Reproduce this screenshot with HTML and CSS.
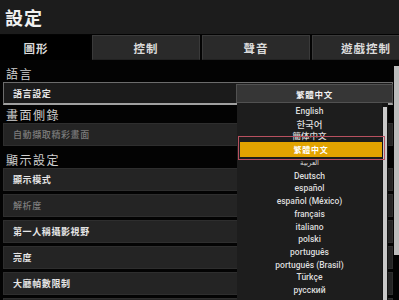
FILE: index.html
```html
<!DOCTYPE html>
<html lang="zh-Hant">
<head>
<meta charset="utf-8">
<link rel="stylesheet" href="styles.css">
</head>
<body>
<div class="app">
  <header class="header"><h1 class="title">設定</h1></header>
  <nav class="tabs">
    <div class="tab active">圖形</div>
    <div class="tab">控制</div>
    <div class="tab">聲音</div>
    <div class="tab">遊戲控制</div>
  </nav>
  <main class="content">
    <div class="label first">語言</div>
    <div class="row focused"><span>語言設定</span></div>
    <div class="label">畫面側錄</div>
    <div class="row dim"><span>自動擷取精彩畫面</span></div>
    <div class="label third">顯示設定</div>
    <div class="row"><span>顯示模式</span></div>
    <div class="row dim"><span>解析度</span></div>
    <div class="row"><span>第一人稱攝影視野</span></div>
    <div class="row"><span>亮度</span></div>
    <div class="row"><span>大廳幀數限制</span></div>
    <div class="row"></div>
  </main>

  <div class="dropdown">
    <div class="dd-head">繁體中文</div>
    <div class="dd-list">
      <div class="dd-items">
        <div class="item">English</div>
        <div class="item kr">한국어</div>
        <div class="item">簡体中文</div>
        <div class="item selected">繁體中文</div>
        <div class="item ar">العربية</div>
        <div class="item">Deutsch</div>
        <div class="item">español</div>
        <div class="item">español (México)</div>
        <div class="item">français</div>
        <div class="item">italiano</div>
        <div class="item">polski</div>
        <div class="item">português</div>
        <div class="item">português (Brasil)</div>
        <div class="item">Türkçe</div>
        <div class="item">русский</div>
      </div>
      <div class="dd-track"><div class="dd-thumb"></div></div>
      <div class="focus-ring"></div>
    </div>
  </div>

  <div class="page-scroll"></div>
</div>
</body>
</html>
```
FILE: styles.css
```css
* { box-sizing: border-box; margin: 0; padding: 0; }
html, body { background: #000; }
body { margin: 0; overflow: hidden; font-family: "Noto Sans CJK TC", "Noto Sans", sans-serif; }

.app { position: relative; width: 399px; height: 300px; overflow: hidden; background: #030303; }

.header { height: 34px; background: #1c1c1c; padding-left: 5px; display: flex; align-items: center; }
.title { font-size: 18px; font-weight: 700; color: #f0f0f0; line-height: 1; letter-spacing: 1px; }

.tabs { display: flex; gap: 2px; margin-top: 1px; margin-left: -18px; height: 25px; }
.tab { flex: 0 0 108px; display: flex; align-items: center; justify-content: center;
  font-size: 11.5px; font-weight: 700; color: #dadada; letter-spacing: 1px;
  background: #2a2a2a; border: 1px solid #3a3a3a; border-bottom-color: #222; }
.tab.active { background: #000; border-color: #000; }

.content { padding: 0 6px 0 3px; }
.label { height: 18px; line-height: 20px; padding-left: 3px; font-size: 12px; color: #d0d0d0; letter-spacing: 1.5px; }
.label.first { margin-top: 4px; }
.label.third { height: 19px; line-height: 22px; }

.row { height: 23px; margin-bottom: 3px; background: #242424; border: 1px solid #2e2e2e;
  display: flex; align-items: center; padding-left: 9px;
  font-size: 9px; font-weight: 700; color: #e6e6e6; letter-spacing: 0.6px; }
.row.dim { color: #7c7c7c; font-weight: 500; }
.row.focused { background: #1b1b1b; border: 1px solid #6c6c6c; border-bottom: 2px solid #a0a0a0; margin-bottom: 0; }

.dropdown { position: absolute; left: 236px; top: 84px; width: 157px; }
.dd-head { height: 19px; background: #363636; border: 1px solid #515151;
  display: flex; align-items: center; justify-content: center;
  font-size: 8.5px; font-weight: 700; color: #f2f2f2; letter-spacing: 0.8px; }
.dd-list { position: relative; margin-left: 1px; width: 151px; height: 200px; background: #1d1d1d; display: flex; }
.dd-items { flex: 1; padding-top: 2px; }
.item { height: 12.7px; line-height: 12.7px; text-align: center; font-family: Roboto, "Noto Sans CJK TC", sans-serif;
  font-size: 8.5px; font-weight: 500; color: #dcdcdc; }
.item.kr { font-family: "Noto Sans CJK KR", sans-serif; font-size: 9.5px; }
.item.ar { font-size: 7px; }
.item.selected { height: 15px; line-height: 15px; margin: -1px 0 0 3px; background: #e2a300; color: #fff;
  font-family: "Noto Sans CJK TC", sans-serif; font-weight: 700; font-size: 8px; letter-spacing: 0.8px; }
.dd-track { flex: 0 0 6px; background: #151515; padding: 4px 1px 0 1px; }
.dd-thumb { height: 100%; background: #c9c9c9; }
.focus-ring { position: absolute; left: 1px; top: 33px; width: 147px; height: 24px; border: 1px solid #b8505f; }

.page-scroll { position: absolute; right: 0; top: 66px; width: 5px; height: 189px; background: #bdbdbd; }
```
